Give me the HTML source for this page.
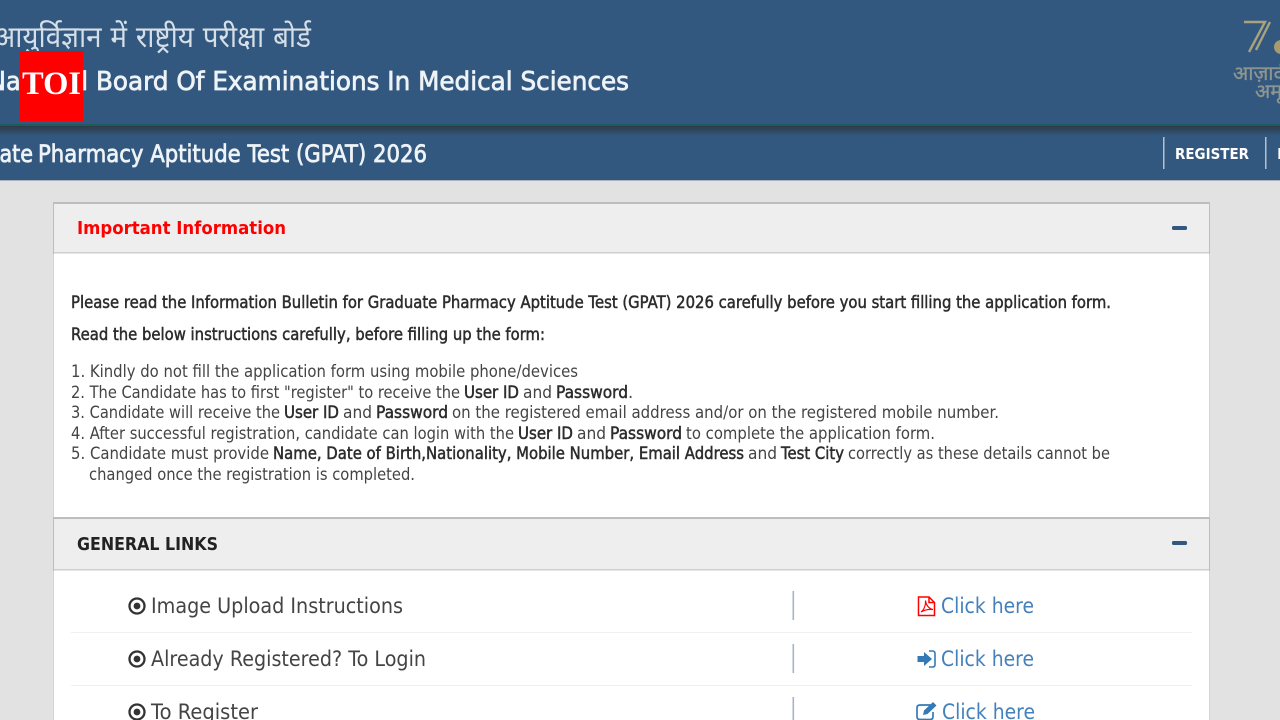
<!DOCTYPE html>
<html lang="en"><head><meta charset="utf-8"><title>GPAT 2026</title>
<style>
html,body{margin:0;padding:0;width:1280px;height:720px;overflow:hidden;background:#e2e2e2}
svg{display:block;position:absolute;left:0;top:0;filter:blur(.3px)}
text{font-family:"DejaVu Sans","Noto Sans Devanagari","Lohit Devanagari",sans-serif;white-space:pre}
.b{font-size:16.4px;fill:#444}
.s{font-size:16.4px;fill:#2c2c2c;stroke:#2c2c2c;stroke-width:.5}
.r{font-size:21px;fill:#444}
.c{font-size:21px;fill:#4480ba}
.w{fill:#eef3f7;stroke:#eef3f7;stroke-width:.75}
</style></head><body>
<svg width="1280" height="720" viewBox="0 0 1280 720" xmlns="http://www.w3.org/2000/svg">
<defs><linearGradient id="g" x1="0" y1="0" x2="0" y2="1"><stop offset="0" stop-color="#2c3a48"/><stop offset="1" stop-color="#33587f"/></linearGradient></defs>
<rect width="1280" height="720" fill="#e2e2e2"/>
<rect width="1280" height="124" fill="#33587f"/>
<rect y="124" width="1280" height="2" fill="#1f5a5e"/>
<rect y="126" width="1280" height="54" fill="#33587f"/>
<rect y="126" width="1280" height="10" fill="url(#g)"/>
<rect y="180" width="1280" height="1" fill="#a9b4c0"/>

<text x="-6" y="47" font-size="30" fill="#d5dfe8" textLength="317" lengthAdjust="spacingAndGlyphs">आयुर्विज्ञान में राष्ट्रीय परीक्षा बोर्ड</text>
<text x="-12" y="90" font-size="26" class="w" textLength="100" lengthAdjust="spacingAndGlyphs">National</text>
<text x="96" y="90" font-size="26" class="w" textLength="533" lengthAdjust="spacingAndGlyphs">Board Of Examinations In Medical Sciences</text>
<rect x="20" y="51" width="63" height="70" fill="#f00"/>
<text x="22" y="94" style="font-family:'Liberation Serif',serif;font-weight:700" font-size="33" fill="#fff" textLength="59" lengthAdjust="spacingAndGlyphs">TOI</text>

<text x="-64" y="162" font-size="24" class="w" textLength="97" lengthAdjust="spacingAndGlyphs">Graduate</text>
<text x="38" y="162" font-size="24" class="w" textLength="389" lengthAdjust="spacingAndGlyphs">Pharmacy Aptitude Test (GPAT) 2026</text>
<rect x="1163" y="137" width="1.5" height="32" fill="#b4c0cc"/>
<rect x="1265" y="137" width="1.5" height="32" fill="#b4c0cc"/>
<text x="1175" y="159" font-size="15.5" font-weight="700" fill="#fff" textLength="74" lengthAdjust="spacingAndGlyphs">REGISTER</text>
<text x="1277" y="159" font-size="15.5" font-weight="700" fill="#fff">LOGIN</text>

<g fill="none" stroke="#a8a27e" stroke-width="2.4">
<path d="M1244 22H1265L1249 52M1270 22L1256 50"/>
</g>
<circle cx="1281" cy="47" r="7" fill="#a89a6e"/>
<text x="1233" y="80" font-size="20" fill="#8f9690" stroke="#8f9690" stroke-width=".3">आज़ादी</text>
<text x="1255" y="98" font-size="20" fill="#8f9690" stroke="#8f9690" stroke-width=".3">अमृत</text>

<!-- panel -->
<rect x="53" y="202" width="1157" height="530" fill="#d4d4d4"/>
<rect x="53" y="202" width="1157" height="52" fill="#bdbdbd"/>
<rect x="54" y="204" width="1155" height="520" fill="#fff"/>
<rect x="54" y="204" width="1155" height="48" fill="#eee"/>
<rect x="54" y="252" width="1155" height="1.5" fill="#cfcfcf"/>
<text x="77" y="234" font-size="18" font-weight="700" fill="#f00" textLength="209" lengthAdjust="spacingAndGlyphs">Important Information</text>
<rect x="1172" y="226" width="15" height="4" rx="1.5" fill="#33587f"/>

<text class="s" x="71" y="308" textLength="1040" lengthAdjust="spacingAndGlyphs">Please read the Information Bulletin for Graduate Pharmacy Aptitude Test (GPAT) 2026 carefully before you start filling the application form.</text>
<text class="s" x="71" y="340" textLength="474" lengthAdjust="spacingAndGlyphs">Read the below instructions carefully, before filling up the form:</text>

<text class="b" x="71" y="377" textLength="507" lengthAdjust="spacingAndGlyphs">1. Kindly do not fill the application form using mobile phone/devices</text>

<text class="b" x="71" y="398" textLength="389" lengthAdjust="spacingAndGlyphs">2. The Candidate has to first "register" to receive the</text>
<text class="s" x="464" y="398" textLength="55" lengthAdjust="spacingAndGlyphs">User ID</text>
<text class="b" x="523" y="398" textLength="29" lengthAdjust="spacingAndGlyphs">and</text>
<text class="s" x="556" y="398" textLength="72" lengthAdjust="spacingAndGlyphs">Password</text>
<text class="b" x="628" y="398">.</text>

<text class="b" x="71" y="418" textLength="209" lengthAdjust="spacingAndGlyphs">3. Candidate will receive the</text>
<text class="s" x="284" y="418" textLength="55" lengthAdjust="spacingAndGlyphs">User ID</text>
<text class="b" x="343" y="418" textLength="29" lengthAdjust="spacingAndGlyphs">and</text>
<text class="s" x="376" y="418" textLength="72" lengthAdjust="spacingAndGlyphs">Password</text>
<text class="b" x="452" y="418" textLength="547" lengthAdjust="spacingAndGlyphs">on the registered email address and/or on the registered mobile number.</text>

<text class="b" x="71" y="439" textLength="443" lengthAdjust="spacingAndGlyphs">4. After successful registration, candidate can login with the</text>
<text class="s" x="518" y="439" textLength="55" lengthAdjust="spacingAndGlyphs">User ID</text>
<text class="b" x="577" y="439" textLength="29" lengthAdjust="spacingAndGlyphs">and</text>
<text class="s" x="610" y="439" textLength="72" lengthAdjust="spacingAndGlyphs">Password</text>
<text class="b" x="686" y="439" textLength="249" lengthAdjust="spacingAndGlyphs">to complete the application form.</text>

<text class="b" x="71" y="459" textLength="198" lengthAdjust="spacingAndGlyphs">5. Candidate must provide</text>
<text class="s" x="273" y="459" textLength="471" lengthAdjust="spacingAndGlyphs">Name, Date of Birth,Nationality, Mobile Number, Email Address</text>
<text class="b" x="748" y="459" textLength="29" lengthAdjust="spacingAndGlyphs">and</text>
<text class="s" x="781" y="459" textLength="63" lengthAdjust="spacingAndGlyphs">Test City</text>
<text class="b" x="848" y="459" textLength="262" lengthAdjust="spacingAndGlyphs">correctly as these details cannot be</text>
<text class="b" x="89" y="480" textLength="326" lengthAdjust="spacingAndGlyphs">changed once the registration is completed.</text>

<rect x="53" y="517" width="1157" height="54" fill="#bdbdbd"/>
<rect x="54" y="519" width="1155" height="201" fill="#fff"/>
<rect x="54" y="519" width="1155" height="50" fill="#eee"/>
<rect x="54" y="569" width="1155" height="1.5" fill="#cfcfcf"/>
<text x="77" y="550" font-size="18" font-weight="700" fill="#222" textLength="141" lengthAdjust="spacingAndGlyphs">GENERAL LINKS</text>
<rect x="1172" y="541" width="15" height="4" rx="1.5" fill="#33587f"/>

<rect x="71" y="632" width="1121" height="1" fill="#f0f0f0"/>
<rect x="71" y="685" width="1121" height="1" fill="#f0f0f0"/>
<rect x="792.5" y="591" width="1.6" height="29" fill="#a3b6ca"/>
<rect x="792.5" y="644" width="1.6" height="29" fill="#a3b6ca"/>
<rect x="792.5" y="697" width="1.6" height="23" fill="#a3b6ca"/>

<g fill="none" stroke="#333" stroke-width="2.3">
<circle cx="137" cy="606" r="7.5"/><circle cx="137" cy="659" r="7.5"/><circle cx="137" cy="712" r="7.5"/>
</g>
<g fill="#333"><circle cx="137" cy="606" r="3.4"/><circle cx="137" cy="659" r="3.4"/><circle cx="137" cy="712" r="3.4"/></g>

<text class="r" x="151" y="613" textLength="252" lengthAdjust="spacingAndGlyphs">Image Upload Instructions</text>
<text class="r" x="151" y="666" textLength="275" lengthAdjust="spacingAndGlyphs">Already Registered? To Login</text>
<text class="r" x="151" y="719" textLength="107" lengthAdjust="spacingAndGlyphs">To Register</text>

<path d="M918.5 597H929L934.5 602.5V615.5H918.5ZM929 597V602.5H934.5" fill="none" stroke="#f00" stroke-width="1.5"/>
<path d="M921 612C924 610 926 605 925.5 600.5C926 605 929 609 933 609.5C929 609 924 610 921 612Z" fill="none" stroke="#f00" stroke-width="1.2"/>
<path d="M917.5 656H924V652L932 659L924 666V662H917.5Z" fill="#337ab7"/>
<path d="M929 651H932.5Q935 651 935 653.5V664.5Q935 667 932.5 667H929" fill="none" stroke="#337ab7" stroke-width="1.6"/>
<path d="M932 705H920Q917 705 917 708V716.5Q917 719.5 920 719.5H930Q933 719.5 933 716.5V712" fill="none" stroke="#337ab7" stroke-width="1.7"/>
<path d="M923 715L924 710.5L933 702L936.5 705.5L927.5 714Z" fill="#337ab7"/>

<text class="c" x="941" y="613" textLength="93" lengthAdjust="spacingAndGlyphs">Click here</text>
<text class="c" x="941" y="666" textLength="93" lengthAdjust="spacingAndGlyphs">Click here</text>
<text class="c" x="942" y="719" textLength="93" lengthAdjust="spacingAndGlyphs">Click here</text>
</svg>
</body></html>
